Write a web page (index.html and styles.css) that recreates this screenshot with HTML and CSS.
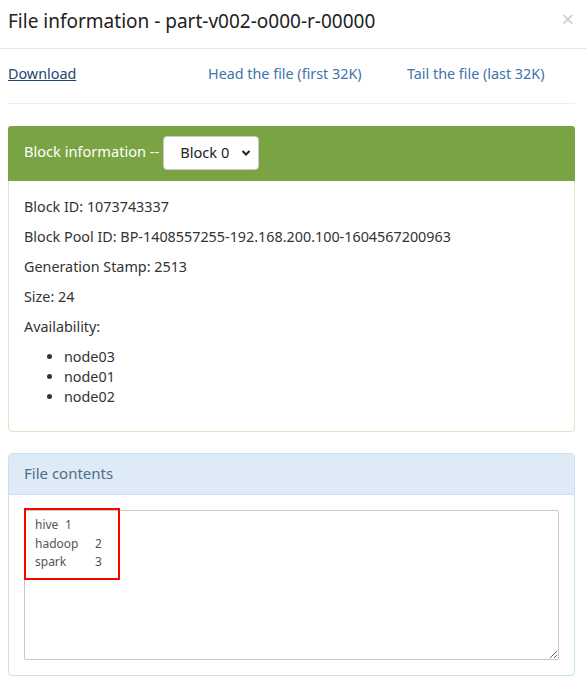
FILE: index.html
```html
<!DOCTYPE html>
<html>
<head>
<meta charset="utf-8">
<link rel="stylesheet" href="styles.css">
</head>
<body>
<div class="modal">
  <div class="modal-header">
    <h4 class="modal-title">File information - part-v002-o000-r-00000</h4>
    <span class="close">×</span>
  </div>
  <div class="modal-body">
    <div class="links">
      <a class="dl" href="#">Download</a>
      <a href="#">Head the file (first 32K)</a>
      <a href="#">Tail the file (last 32K)</a>
    </div>
    <hr class="sep">
    <div class="panel panel-green">
      <div class="panel-heading">
        <span class="heading-text">Block information --</span>
        <span class="select">Block 0
          <svg class="chev" width="10" height="8" viewBox="0 0 10 8"><path d="M1.5 2 L5 5.5 L8.5 2" fill="none" stroke="#222" stroke-width="2"/></svg>
        </span>
      </div>
      <div class="panel-body green-body">
        <p>Block ID: 1073743337</p>
        <p>Block Pool ID: BP-1408557255-192.168.200.100-1604567200963</p>
        <p>Generation Stamp: 2513</p>
        <p>Size: 24</p>
        <p>Availability:</p>
        <ul>
          <li>node03</li>
          <li>node01</li>
          <li>node02</li>
        </ul>
      </div>
    </div>
    <div class="panel panel-info">
      <div class="panel-heading">File contents</div>
      <div class="panel-body info-body">
        <textarea class="textarea" readonly>hive	1
hadoop	2
spark	3</textarea>
        <div class="highlight"></div>
      </div>
    </div>
  </div>
</div>
</body>
</html>
```

FILE: styles.css
```css
* { box-sizing: border-box; }
html, body { margin: 0; padding: 0; background: #fff; }
body {
  font-family: "Noto Sans", "Open Sans", sans-serif;
  font-size: 14.35px;
  color: #333;
  width: 586px;
}
.modal-header {
  display: flex;
  justify-content: space-between;
  align-items: center;
  height: 49px;
  padding: 0 12px 0 8px;
  border-bottom: 1px solid #e5e5e5;
}
.modal-title {
  margin: 0;
  font-size: 19px;
  font-weight: normal;
  color: #222;
  line-height: 27px;
  margin-top: -6px;
}
.close {
  font-size: 22px;
  color: #cdcdcd;
  font-weight: normal;
  margin-top: -12px;
}
.modal-body {
  padding: 0 11px 12px 8px;
}
.links {
  display: grid;
  grid-template-columns: 200px 199px auto;
  height: 20px;
  line-height: 20px;
  margin-top: 15px;
}
.links a {
  color: #3f73ab;
  text-decoration: none;
}
.links a.dl {
  color: #23466f;
  text-decoration: underline;
}
.sep {
  border: 0;
  border-top: 1px solid #eee;
  margin: 19px 0 22px;
}
.panel {
  border: 1px solid;
  border-radius: 4px;
  margin-bottom: 21px;
  background: #fff;
}
.panel-green { border-color: #d6e9c6; }
.panel-green .panel-heading {
  background: #7aa343;
  color: #fff;
  height: 55px;
  display: flex;
  align-items: center;
  gap: 4px;
  font-size: 14.6px;
  border-radius: 3px 3px 0 0;
  margin: -1px -1px 0;
  padding: 0 15px 2px 16px;
}
.heading-text { margin-bottom: 3px; }
.select {
  display: inline-flex;
  align-items: center;
  justify-content: space-between;
  width: 96px;
  height: 34px;
  background: #fff;
  border: 1px solid #ccc;
  border-radius: 4px;
  color: #222;
  font-size: 14.6px;
  padding: 0 7px 2px 16px;
}
.chev { margin-top: 2px; }
.panel-body {
  padding: 16px 15px 15px;
}
.green-body {
  padding: 16px 15px 14px;
}
.panel-body p {
  margin: 0 0 10px;
  line-height: 20px;
}
.panel-body ul {
  margin: 0 0 10px;
  padding-left: 40px;
  line-height: 20px;
}
.panel-info { border-color: #c8e3f0; margin-bottom: 10px; }
.panel-info .panel-heading {
  background: #deebf6;
  color: #4f6c88;
  font-size: 15px;
  line-height: 20px;
  padding: 9px 15px 11px 15px;
  border-bottom: 1px solid #c8e3f0;
  border-radius: 3px 3px 0 0;
}
.info-body { position: relative; padding-top: 15px; }
.textarea {
  display: block;
  width: 100%;
  height: 150px;
  margin: 0;
  border: 1px solid #c9c9c9;
  border-radius: 2px;
  padding: 5px 10px;
  font-family: "Noto Sans", "Open Sans", sans-serif;
  font-size: 12px;
  line-height: 18.5px;
  color: #555;
  background: #fff;
  tab-size: 30px;
  resize: vertical;
  overflow: hidden;
  outline: none;
}
.highlight {
  position: absolute;
  left: 15px;
  top: 13px;
  width: 96px;
  height: 72px;
  border: 2px solid #f00;
}
```
